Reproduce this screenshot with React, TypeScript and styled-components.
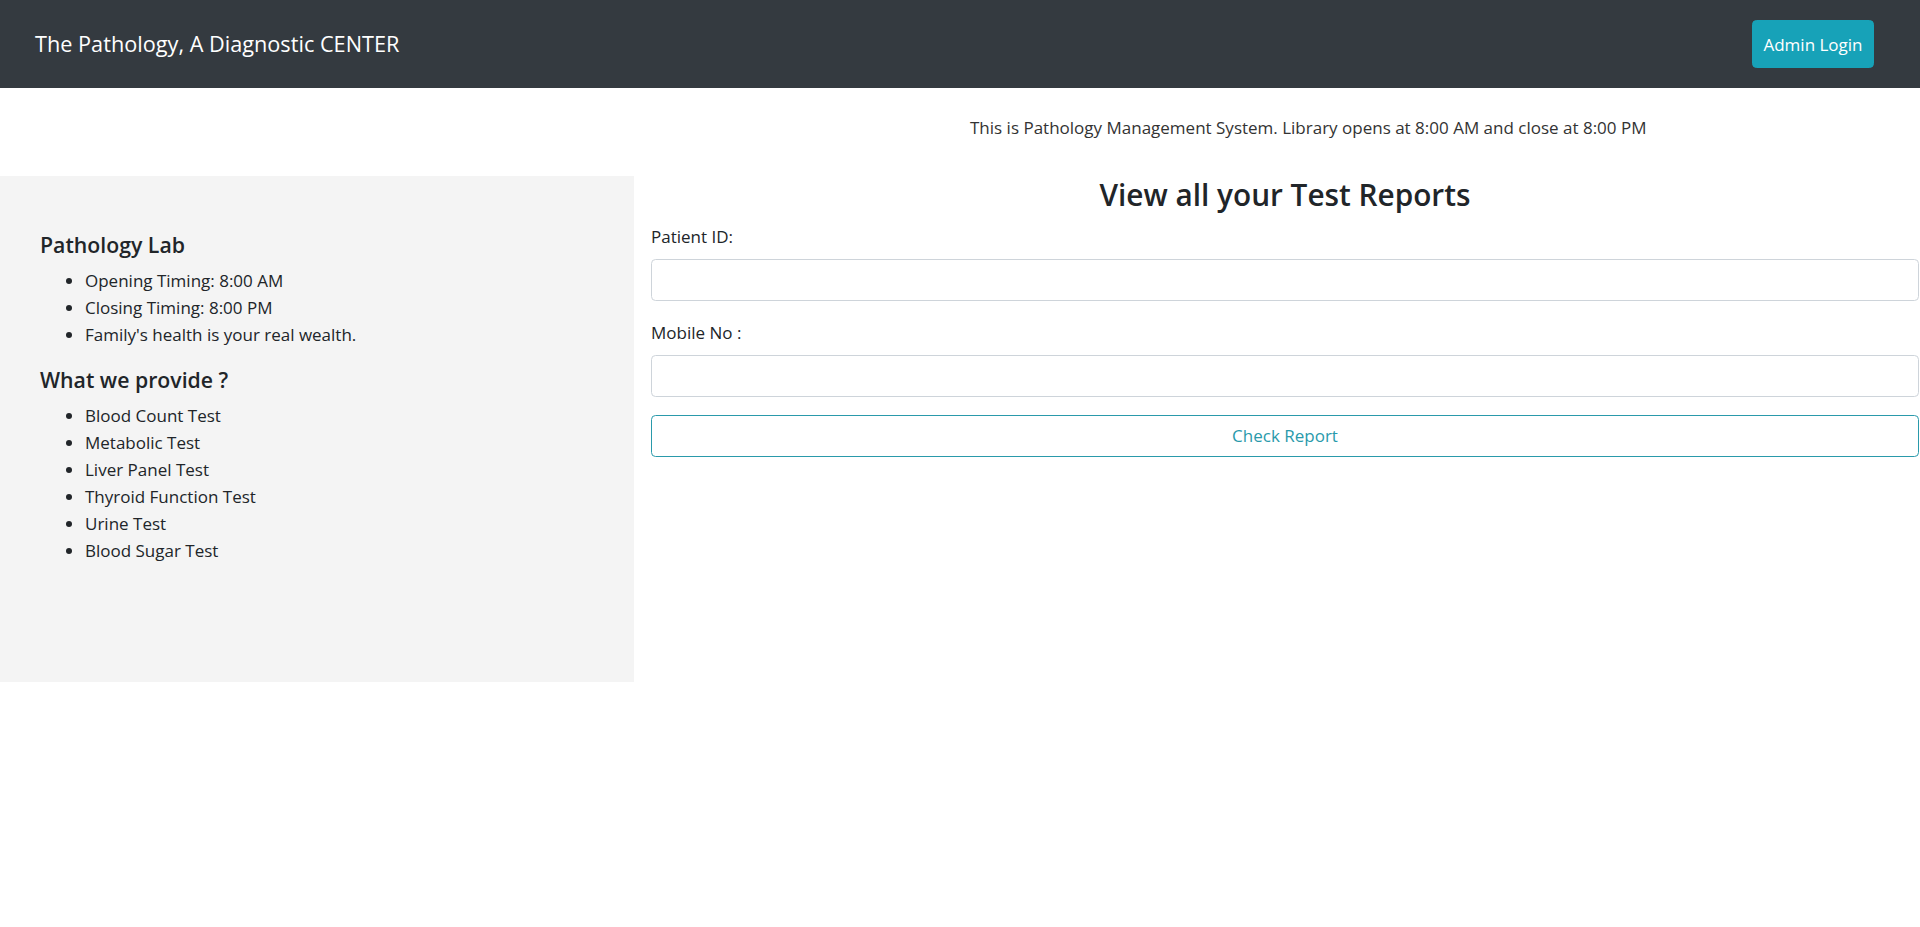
import React from "react";
import styled, { createGlobalStyle } from "styled-components";

const GlobalStyle = createGlobalStyle`
  html, body {
    margin: 0;
    padding: 0;
    background: #ffffff;
  }
  body {
    font-family: "Open Sans", "Noto Sans", "Liberation Sans", sans-serif;
    font-size: 17px;
    line-height: 27px;
    color: #212529;
  }
  * { box-sizing: border-box; }
`;

const Navbar = styled.nav`
  height: 88px;
  background: #343a40;
  display: flex;
  align-items: center;
  justify-content: space-between;
  padding: 0 46px 0 35px;
`;

const Brand = styled.a`
  font-size: 21.7px;
  line-height: 34px;
  color: #ffffff;
  text-decoration: none;
  white-space: nowrap;
`;

const NavButton = styled.button`
  width: 122px;
  height: 48px;
  background: #17a2b8;
  border: 1px solid #17a2b8;
  border-radius: 4.5px;
  color: #ffffff;
  font-family: inherit;
  font-size: 17px;
  line-height: 27px;
  padding: 0;
  cursor: pointer;
`;

const Notice = styled.div`
  height: 88px;
  padding: 26px 0 0 970px;
  line-height: 27px;
  color: #333333;
  white-space: nowrap;
  overflow: hidden;
`;

const Row = styled.div`
  display: grid;
  grid-template-columns: 634px 1fr;
  align-items: start;
`;

const Sidebar = styled.aside`
  background: #f4f4f4;
  min-height: 506px;
  padding: 55px 40px 0 40px;
`;

const SideHeading = styled.h5`
  margin: 0 0 9px;
  font-size: 21.25px;
  line-height: 27px;
  font-weight: 600;
`;

const List = styled.ul`
  margin: 0 0 18px;
  padding-left: 45px;
  list-style: disc;
`;

const Item = styled.li`
  line-height: 27px;
`;

const Main = styled.main`
  padding: 0 1px 0 17px;
`;

const Title = styled.h3`
  margin: 0 0 9px;
  font-size: 29.75px;
  line-height: 37.8px;
  font-weight: 600;
  text-align: center;
`;

const Field = styled.div`
  margin-bottom: 18px;
`;

const Label = styled.label`
  display: block;
  margin-bottom: 9px;
  line-height: 27px;
`;

const Input = styled.input`
  display: block;
  width: 100%;
  height: 42px;
  border: 1px solid #ced4da;
  border-radius: 4.5px;
  background: #ffffff;
  padding: 6px 13px;
  font-family: inherit;
  font-size: 17px;
  color: #495057;
  outline: none;
`;

const CheckButton = styled.button`
  display: block;
  width: 100%;
  height: 42px;
  border: 1px solid #2a9aab;
  border-radius: 4.5px;
  background: transparent;
  color: #2a9aab;
  font-family: inherit;
  font-size: 17px;
  line-height: 27px;
  cursor: pointer;
`;

const labInfo = [
  "Opening Timing: 8:00 AM",
  "Closing Timing: 8:00 PM",
  "Family's health is your real wealth.",
];

const services = [
  "Blood Count Test",
  "Metabolic Test",
  "Liver Panel Test",
  "Thyroid Function Test",
  "Urine Test",
  "Blood Sugar Test",
];

export default function App() {
  return (
    <>
      <GlobalStyle />
      <Navbar>
        <Brand href="#">The Pathology, A Diagnostic CENTER</Brand>
        <NavButton type="button">Admin Login</NavButton>
      </Navbar>
      <Notice>
        This is Pathology Management System. Library opens at 8:00 AM and close at 8:00 PM
      </Notice>
      <Row>
        <Sidebar>
          <SideHeading>Pathology Lab</SideHeading>
          <List>
            {labInfo.map((t) => (
              <Item key={t}>{t}</Item>
            ))}
          </List>
          <SideHeading>What we provide ?</SideHeading>
          <List>
            {services.map((t) => (
              <Item key={t}>{t}</Item>
            ))}
          </List>
        </Sidebar>
        <Main>
          <Title>View all your Test Reports</Title>
          <form onSubmit={(e) => e.preventDefault()}>
            <Field>
              <Label htmlFor="pid">Patient ID:</Label>
              <Input id="pid" type="text" />
            </Field>
            <Field>
              <Label htmlFor="mobile">Mobile No :</Label>
              <Input id="mobile" type="text" />
            </Field>
            <CheckButton type="submit">Check Report</CheckButton>
          </form>
        </Main>
      </Row>
    </>
  );
}
